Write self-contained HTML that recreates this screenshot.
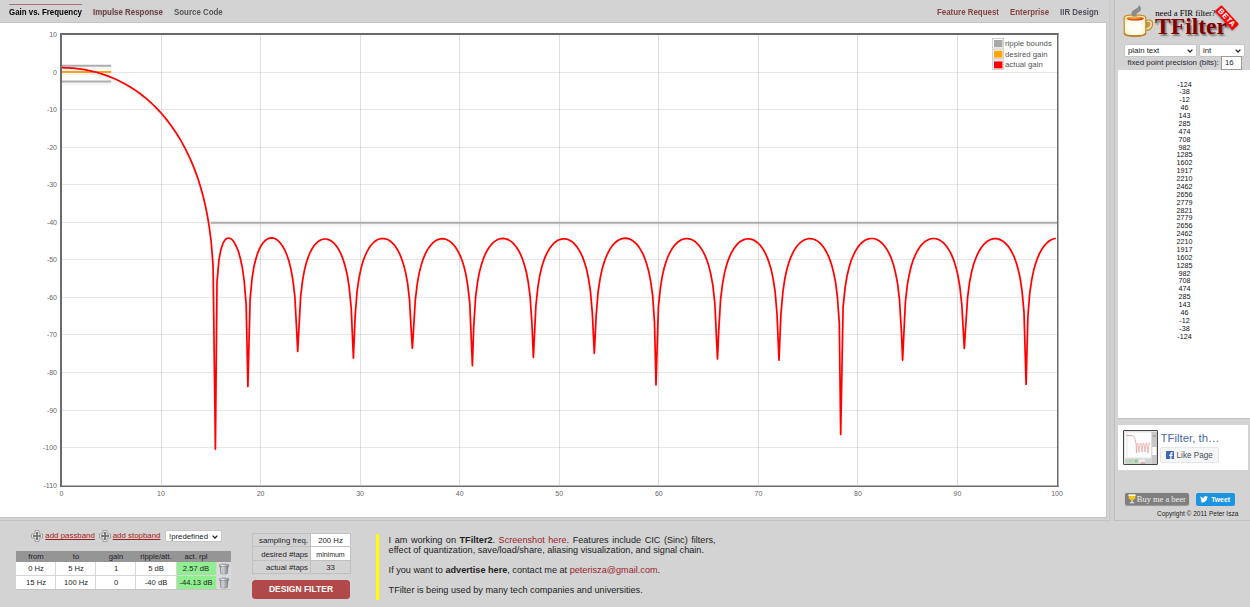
<!DOCTYPE html>
<html><head><meta charset="utf-8">
<style>
*{box-sizing:border-box}
html,body{margin:0;padding:0}
body{width:1250px;height:607px;background:#d3d3d3;position:relative;overflow:hidden;font-family:"Liberation Sans",sans-serif;color:#222}
.a{position:absolute;white-space:nowrap}
.nav{font-weight:bold;font-size:8.7px;line-height:10px;transform:scaleX(0.91);transform-origin:0 0}
.chart{position:absolute;left:0;top:22px;width:1107px;height:496px;background:#fff;border-top:1px solid #c4c4c4;border-right:1px solid #c4c4c4;border-bottom:1px solid #c4c4c4}
svg text{font-family:"Liberation Sans",sans-serif}
.sel{position:absolute;background:#fff;border:1px solid #c6c6c6;border-radius:2px;font-size:7.8px;line-height:10px;color:#1a1a24}
.chev{position:absolute;right:3px;top:3.5px;width:6px;height:4px;display:block}
table.bands{position:absolute;left:16px;top:551px;border-collapse:collapse;font-size:7.6px}
.p{font-size:9.15px;line-height:10px;color:#222}
</style></head><body>

<!-- header nav -->
<div class="a" style="left:9px;top:4px;width:73px;height:1px;background:#a47474"></div>
<div class="a nav" style="left:9.4px;top:6.6px;color:#000">Gain vs. Frequency</div>
<div class="a nav" style="left:93px;top:6.6px;color:#544c50;text-shadow:0 0 2px rgba(255,150,150,.75)">Impulse Response</div>
<div class="a nav" style="left:174px;top:6.6px;color:#555">Source Code</div>
<div class="a nav" style="left:937px;top:6.6px;color:#844444">Feature Request</div>
<div class="a nav" style="left:1009.5px;top:6.6px;color:#844444">Enterprise</div>
<div class="a nav" style="left:1059.5px;top:6.6px;color:#50505c">IIR Design</div>

<!-- panel borders -->
<div class="a" style="left:1109px;top:0;width:1px;height:521px;background:#c8c8c8"></div>
<div class="a" style="left:1110px;top:0;width:4px;height:521px;background:#cfcfcf"></div>
<div class="a" style="left:0;top:520px;width:1110px;height:1px;background:#c4c4c4"></div>
<div class="a" style="left:1114px;top:0;width:1px;height:521px;background:#c0c0c0"></div>
<div class="a" style="left:1114px;top:520px;width:136px;height:1px;background:#c0c0c0"></div>

<!-- chart -->
<div class="chart"></div>
<svg class="a" style="left:0;top:0" width="1250" height="607" viewBox="0 0 1250 607">
<defs>
<filter id="sh" x="-5%" y="-50%" width="110%" height="200%"><feGaussianBlur in="SourceAlpha" stdDeviation="0.8"/><feOffset dx="0" dy="1.5"/><feComponentTransfer><feFuncA type="linear" slope="0.08"/></feComponentTransfer><feMerge><feMergeNode/><feMergeNode in="SourceGraphic"/></feMerge></filter>
<clipPath id="pc"><rect x="62" y="35" width="995" height="450"/></clipPath>
</defs>
<line x1="161.50" y1="35" x2="161.50" y2="485" stroke="#000" stroke-opacity="0.125" stroke-width="1"/>
<line x1="260.50" y1="35" x2="260.50" y2="485" stroke="#000" stroke-opacity="0.125" stroke-width="1"/>
<line x1="360.50" y1="35" x2="360.50" y2="485" stroke="#000" stroke-opacity="0.125" stroke-width="1"/>
<line x1="459.50" y1="35" x2="459.50" y2="485" stroke="#000" stroke-opacity="0.125" stroke-width="1"/>
<line x1="559.50" y1="35" x2="559.50" y2="485" stroke="#000" stroke-opacity="0.125" stroke-width="1"/>
<line x1="658.50" y1="35" x2="658.50" y2="485" stroke="#000" stroke-opacity="0.125" stroke-width="1"/>
<line x1="758.50" y1="35" x2="758.50" y2="485" stroke="#000" stroke-opacity="0.125" stroke-width="1"/>
<line x1="857.50" y1="35" x2="857.50" y2="485" stroke="#000" stroke-opacity="0.125" stroke-width="1"/>
<line x1="957.50" y1="35" x2="957.50" y2="485" stroke="#000" stroke-opacity="0.125" stroke-width="1"/>
<line x1="62" y1="72.50" x2="1057" y2="72.50" stroke="#000" stroke-opacity="0.095" stroke-width="1"/>
<line x1="62" y1="109.50" x2="1057" y2="109.50" stroke="#000" stroke-opacity="0.095" stroke-width="1"/>
<line x1="62" y1="147.50" x2="1057" y2="147.50" stroke="#000" stroke-opacity="0.095" stroke-width="1"/>
<line x1="62" y1="184.50" x2="1057" y2="184.50" stroke="#000" stroke-opacity="0.095" stroke-width="1"/>
<line x1="62" y1="222.50" x2="1057" y2="222.50" stroke="#000" stroke-opacity="0.095" stroke-width="1"/>
<line x1="62" y1="259.50" x2="1057" y2="259.50" stroke="#000" stroke-opacity="0.095" stroke-width="1"/>
<line x1="62" y1="297.50" x2="1057" y2="297.50" stroke="#000" stroke-opacity="0.095" stroke-width="1"/>
<line x1="62" y1="334.50" x2="1057" y2="334.50" stroke="#000" stroke-opacity="0.095" stroke-width="1"/>
<line x1="62" y1="372.50" x2="1057" y2="372.50" stroke="#000" stroke-opacity="0.095" stroke-width="1"/>
<line x1="62" y1="410.50" x2="1057" y2="410.50" stroke="#000" stroke-opacity="0.095" stroke-width="1"/>
<line x1="62" y1="447.50" x2="1057" y2="447.50" stroke="#000" stroke-opacity="0.095" stroke-width="1"/>
<g font-size="7px" fill="#666">
<text x="57" y="37.1" text-anchor="end">10</text>
<text x="57" y="74.7" text-anchor="end">0</text>
<text x="57" y="112.2" text-anchor="end">-10</text>
<text x="57" y="149.8" text-anchor="end">-20</text>
<text x="57" y="187.3" text-anchor="end">-30</text>
<text x="57" y="224.8" text-anchor="end">-40</text>
<text x="57" y="262.4" text-anchor="end">-50</text>
<text x="57" y="299.9" text-anchor="end">-60</text>
<text x="57" y="337.4" text-anchor="end">-70</text>
<text x="57" y="375.0" text-anchor="end">-80</text>
<text x="57" y="412.5" text-anchor="end">-90</text>
<text x="57" y="450.1" text-anchor="end">-100</text>
<text x="57" y="487.6" text-anchor="end">-110</text>
<text x="61.4" y="496" text-anchor="middle">0</text>
<text x="161.0" y="496" text-anchor="middle">10</text>
<text x="260.6" y="496" text-anchor="middle">20</text>
<text x="360.1" y="496" text-anchor="middle">30</text>
<text x="459.7" y="496" text-anchor="middle">40</text>
<text x="559.2" y="496" text-anchor="middle">50</text>
<text x="658.8" y="496" text-anchor="middle">60</text>
<text x="758.4" y="496" text-anchor="middle">70</text>
<text x="857.9" y="496" text-anchor="middle">80</text>
<text x="957.5" y="496" text-anchor="middle">90</text>
<text x="1057.0" y="496" text-anchor="middle">100</text>
</g>
<g clip-path="url(#pc)">

<g filter="url(#sh)">
<line x1="61" y1="65.7" x2="111.2" y2="65.7" stroke="#acacac" stroke-width="2"/>
<line x1="61" y1="81.5" x2="111.2" y2="81.5" stroke="#acacac" stroke-width="2"/>
<line x1="210.8" y1="222.8" x2="1057" y2="222.8" stroke="#acacac" stroke-width="2"/>
<line x1="61" y1="72.0" x2="111.2" y2="72.0" stroke="#f9a51a" stroke-width="1.8"/>
</g>

<path d="M61.4,67.7L63.4,67.7L65.3,67.8L67.3,67.8L69.2,67.9L71.2,68.1L73.1,68.2L75.1,68.4L77.0,68.6L78.9,68.8L80.9,69.1L82.8,69.4L84.8,69.7L86.7,70.1L88.7,70.5L90.6,70.9L92.6,71.4L94.5,71.8L96.4,72.3L98.4,72.9L100.3,73.5L102.3,74.1L104.2,74.7L106.2,75.4L108.1,76.1L110.1,76.9L112.0,77.7L113.9,78.5L115.9,79.3L117.8,80.2L119.8,81.2L121.7,82.2L123.7,83.2L125.6,84.3L127.6,85.4L129.5,86.5L131.4,87.7L133.4,89.0L135.3,90.3L137.3,91.6L139.2,93.0L141.2,94.5L143.1,96.0L145.1,97.6L147.0,99.2L148.9,100.9L150.9,102.7L152.8,104.5L154.8,106.4L156.7,108.3L158.7,110.4L160.6,112.5L162.6,114.7L164.5,117.0L166.4,119.4L168.4,121.9L170.3,124.5L172.3,127.2L174.2,130.0L176.2,132.9L178.1,136.0L180.1,139.2L182.0,142.6L183.9,146.1L185.9,149.8L187.8,153.8L189.8,157.9L191.7,162.3L193.7,167.1L195.6,172.1L197.6,177.6L199.5,183.5L201.4,190.0L203.4,197.3L205.3,205.5L207.3,215.1L209.2,226.7L211.2,242.0L213.1,266.1L215.4,449.1L217.0,282.1L218.9,260.2L220.9,249.7L222.8,243.7L224.8,240.2L226.7,238.5L228.7,238.0L230.6,238.6L232.6,240.2L234.5,242.8L236.4,246.5L238.4,251.5L240.3,258.2L242.3,267.4L244.2,281.0L246.2,305.3L247.9,386.4L250.1,299.3L252.0,278.8L253.9,266.8L255.9,258.7L257.8,252.7L259.8,248.2L261.7,244.7L263.7,242.1L265.6,240.2L267.6,238.9L269.5,238.1L271.4,237.9L273.4,238.1L275.3,238.8L277.3,240.0L279.2,241.8L281.2,244.1L283.1,247.0L285.1,250.7L287.0,255.3L289.0,261.2L290.9,268.9L292.8,279.5L294.8,295.8L296.7,330.8L297.7,351.5L300.6,296.9L302.6,280.4L304.5,269.9L306.5,262.3L308.4,256.5L310.3,252.0L312.3,248.4L314.2,245.5L316.2,243.3L318.1,241.5L320.1,240.3L322.0,239.5L324.0,239.0L325.9,239.0L327.8,239.4L329.8,240.1L331.7,241.3L333.7,242.9L335.6,245.0L337.6,247.7L339.5,251.0L341.5,255.1L343.4,260.2L345.3,266.7L347.3,275.2L349.2,287.4L351.2,307.8L353.4,358.2L355.1,316.9L357.0,292.0L359.0,278.2L360.9,268.9L362.8,261.9L364.8,256.5L366.7,252.1L368.7,248.6L370.6,245.8L372.6,243.5L374.5,241.7L376.5,240.3L378.4,239.3L380.3,238.7L382.3,238.5L384.2,238.6L386.2,239.0L388.1,239.8L390.1,241.0L392.0,242.6L394.0,244.6L395.9,247.2L397.8,250.3L399.8,254.2L401.7,258.9L403.7,264.9L405.6,272.6L407.6,283.2L409.5,299.6L411.5,335.0L412.4,348.1L415.3,300.0L417.3,283.5L419.2,272.9L421.2,265.1L423.1,259.2L425.1,254.4L427.0,250.6L429.0,247.5L430.9,245.0L432.8,242.9L434.8,241.3L436.7,240.1L438.7,239.3L440.6,238.9L442.6,238.7L444.5,238.9L446.5,239.5L448.4,240.4L450.3,241.7L452.3,243.4L454.2,245.5L456.2,248.2L458.1,251.4L460.1,255.4L462.0,260.3L464.0,266.5L465.9,274.6L467.8,285.9L469.8,303.9L472.4,365.7L473.7,327.0L475.6,297.0L477.6,281.8L479.5,271.8L481.5,264.4L483.4,258.6L485.3,254.0L487.3,250.2L489.2,247.2L491.2,244.7L493.1,242.7L495.1,241.1L497.0,239.9L499.0,239.0L500.9,238.6L502.8,238.4L504.8,238.6L506.7,239.1L508.7,239.9L510.6,241.1L512.6,242.7L514.5,244.7L516.5,247.2L518.4,250.2L520.3,253.9L522.3,258.5L524.2,264.2L526.2,271.5L528.1,281.4L530.1,296.2L532.0,324.7L533.4,357.5L535.9,305.5L537.9,286.9L539.8,275.4L541.7,267.2L543.7,260.9L545.6,255.9L547.6,251.9L549.5,248.6L551.5,245.9L553.4,243.7L555.4,242.0L557.3,240.6L559.2,239.7L561.2,239.1L563.1,238.8L565.1,238.8L567.0,239.2L569.0,239.9L570.9,241.0L572.9,242.4L574.8,244.3L576.7,246.6L578.7,249.4L580.6,252.9L582.6,257.1L584.5,262.4L586.5,269.1L588.4,278.0L590.4,290.8L592.3,312.6L594.3,353.3L596.2,314.9L598.1,291.9L600.1,278.7L602.0,269.6L604.0,262.7L605.9,257.3L607.9,253.0L609.8,249.4L611.7,246.5L613.7,244.1L615.6,242.2L617.6,240.7L619.5,239.6L621.5,238.8L623.4,238.4L625.4,238.2L627.3,238.4L629.2,238.9L631.2,239.8L633.1,241.0L635.1,242.6L637.0,244.6L639.0,247.1L640.9,250.1L642.9,253.8L644.8,258.3L646.7,264.0L648.7,271.2L650.6,280.9L652.6,295.2L654.5,322.2L656.0,384.9L658.4,307.1L660.4,287.9L662.3,276.1L664.2,267.7L666.2,261.3L668.1,256.3L670.1,252.2L672.0,248.8L674.0,246.1L675.9,243.8L677.9,242.0L679.8,240.7L681.7,239.6L683.7,239.0L685.6,238.6L687.6,238.6L689.5,238.9L691.5,239.5L693.4,240.5L695.4,241.8L697.3,243.6L699.2,245.7L701.2,248.4L703.1,251.6L705.1,255.6L707.0,260.5L709.0,266.6L710.9,274.6L712.9,285.6L714.8,302.8L717.5,359.0L718.7,331.4L720.6,299.1L722.6,283.4L724.5,273.1L726.5,265.5L728.4,259.6L730.4,254.9L732.3,251.1L734.2,248.0L736.2,245.4L738.1,243.4L740.1,241.7L742.0,240.5L744.0,239.6L745.9,239.0L747.9,238.8L749.8,238.9L751.7,239.3L753.7,240.1L755.6,241.2L757.6,242.7L759.5,244.5L761.5,246.9L763.4,249.8L765.4,253.3L767.3,257.6L769.2,262.9L771.2,269.6L773.1,278.6L775.1,291.5L777.0,313.8L779.0,360.1L780.9,314.4L782.9,291.8L784.8,278.8L786.8,269.8L788.7,263.0L790.6,257.6L792.6,253.3L794.5,249.7L796.5,246.8L798.4,244.5L800.4,242.6L802.3,241.1L804.3,239.9L806.2,239.2L808.1,238.7L810.1,238.6L812.0,238.8L814.0,239.3L815.9,240.1L817.9,241.4L819.8,242.9L821.8,244.9L823.7,247.4L825.6,250.5L827.6,254.2L829.5,258.7L831.5,264.4L833.4,271.6L835.4,281.4L837.3,295.9L839.3,323.3L840.7,434.4L843.1,306.8L845.1,287.8L847.0,276.1L849.0,267.7L850.9,261.3L852.9,256.3L854.8,252.2L856.8,248.8L858.7,246.1L860.6,243.8L862.6,242.0L864.5,240.6L866.5,239.6L868.4,238.9L870.4,238.5L872.3,238.5L874.3,238.7L876.2,239.3L878.1,240.3L880.1,241.5L882.0,243.2L884.0,245.3L885.9,247.9L887.9,251.1L889.8,254.9L891.8,259.7L893.7,265.6L895.6,273.3L897.6,283.7L899.5,299.7L901.5,333.3L902.6,360.1L905.4,302.0L907.3,285.1L909.3,274.2L911.2,266.3L913.1,260.3L915.1,255.4L917.0,251.5L919.0,248.2L920.9,245.6L922.9,243.5L924.8,241.7L926.8,240.4L928.7,239.5L930.6,238.8L932.6,238.5L934.5,238.5L936.5,238.9L938.4,239.5L940.4,240.6L942.3,241.9L944.3,243.7L946.2,245.9L948.1,248.6L950.1,251.9L952.0,255.9L954.0,260.9L955.9,267.1L957.9,275.2L959.8,286.5L961.8,304.5L964.3,348.5L965.6,327.7L967.6,297.7L969.5,282.5L971.5,272.4L973.4,265.0L975.4,259.2L977.3,254.6L979.3,250.8L981.2,247.7L983.1,245.2L985.1,243.2L987.0,241.5L989.0,240.3L990.9,239.4L992.9,238.9L994.8,238.6L996.8,238.7L998.7,239.1L1000.6,239.9L1002.6,241.0L1004.5,242.4L1006.5,244.3L1008.4,246.6L1010.4,249.5L1012.3,253.0L1014.3,257.2L1016.2,262.5L1018.1,269.1L1020.1,278.0L1022.0,290.6L1024.0,312.0L1026.1,384.5L1027.9,316.2L1029.8,292.6L1031.8,279.3L1033.7,270.1L1035.7,263.2L1037.6,257.8L1039.5,253.4L1041.5,249.8L1043.4,246.9L1045.4,244.5L1047.3,242.5L1049.3,241.0L1051.2,239.8L1053.2,239.0L1055.1,238.5" fill="none" stroke="#ff0000" stroke-width="1.7" stroke-linejoin="round" stroke-linecap="round" filter="url(#sh)"/>
</g>
<g fill="#6a6a6a"><rect x="60" y="33" width="2" height="454"/><rect x="60" y="33" width="998.5" height="2"/><rect x="1057" y="33" width="1.5" height="454"/><rect x="60" y="485.5" width="998.5" height="1.5"/></g>
<!-- legend -->
<g>
<rect x="991" y="37" width="63" height="33" fill="#fff" fill-opacity="0.85"/>
<rect x="992.5" y="38.5" width="11" height="9.5" fill="none" stroke="#d0d0d0" stroke-width="1"/>
<rect x="994" y="40" width="8.5" height="7" fill="#a8a8a8"/>
<rect x="992.5" y="49.2" width="11" height="9.5" fill="none" stroke="#d0d0d0" stroke-width="1"/>
<rect x="994" y="50.7" width="8.5" height="7" fill="#ffa500"/>
<rect x="992.5" y="59.9" width="11" height="9.5" fill="none" stroke="#d0d0d0" stroke-width="1"/>
<rect x="994" y="61.4" width="8.5" height="7" fill="#ff0000"/>
<g font-size="7.8px" fill="#545454">
<text x="1005" y="46">ripple bounds</text>
<text x="1005" y="56.7">desired gain</text>
<text x="1005" y="67.4">actual gain</text>
</g>
</g>
</svg>

<!-- sidebar -->
<div id="logo">
<svg class="a" style="left:1120px;top:2.7px" width="36" height="36" viewBox="0 0 36 36">
<defs>
<radialGradient id="cupg" cx="0.5" cy="0.55" r="0.65"><stop offset="0" stop-color="#ffffff"/><stop offset="0.6" stop-color="#fffbe2"/><stop offset="1" stop-color="#f5e6b0"/></radialGradient>
<radialGradient id="cof" cx="0.45" cy="0.3" r="0.6"><stop offset="0" stop-color="#f8c040"/><stop offset="0.5" stop-color="#f09020"/><stop offset="1" stop-color="#e02010"/></radialGradient>
<filter id="bl"><feGaussianBlur stdDeviation="0.5"/></filter>
</defs>
<path d="M26 17.5 C31 16 33.5 18.5 32.5 22.5 C31.5 26 28.5 27.5 25.5 27 L25.5 24.5 C28 24.5 30 23 30 21 C30 19.5 28.5 19 26 20 Z" fill="#f6e2b0" stroke="#c08a2a" stroke-width="1.1"/>
<path d="M26 20.3 C28 19.6 29.5 20 29.4 21.5 C29.2 23 27.5 24 26 24 Z" fill="#c89040"/>
<path d="M4.2 14.5 Q4.2 11.8 15 11.8 Q25.8 11.8 25.8 14.5 L25.8 30.5 Q25.8 33.3 15 33.3 Q4.2 33.3 4.2 30.5 Z" fill="url(#cupg)" stroke="#c48c2c" stroke-width="1.2"/>
<path d="M4.6 30 Q4.6 32.8 15 32.8 Q25.4 32.8 25.4 30" fill="none" stroke="#b07a22" stroke-width="1.2"/>
<ellipse cx="15.2" cy="15.5" rx="8.6" ry="2.1" fill="url(#cof)"/>
<path d="M12.5 13.5 C10.5 10.5 11.5 8 15 6.3 C17.5 5 19 4 19 2 C21.5 4 22 7.5 18.5 9.3 C16.2 10.5 15.8 11.5 17 13.5 Z" fill="#8c8c8c" filter="url(#bl)"/>
</svg>
<div class="a" style="left:1155.3px;top:7.7px;font-family:'Liberation Serif',serif;font-size:8.6px;line-height:10px;color:#000">need a FIR filter?</div>
<div class="a" style="left:1155px;top:12.5px;font-family:'Liberation Serif',serif;font-weight:bold;font-size:23.6px;line-height:26px;color:#800000;text-shadow:1.5px 2px 1.5px rgba(0,0,0,.4)">TFilter</div>
<div class="a" style="left:1213.85px;top:13.1px;width:25.5px;height:9px;background:#ff0000;border-radius:1px;transform:rotate(47.3deg);color:#fff;font-weight:bold;font-size:7.6px;line-height:9px;text-align:center;letter-spacing:.5px;text-indent:.5px;box-shadow:0.5px 1px 1.5px rgba(0,0,0,.35)">BETA</div>
</div>

<div class="sel" style="left:1124px;top:44px;width:73px;height:12.5px;padding-left:3px;padding-top:0.5px">plain text<svg class="chev" width="6" height="4" viewBox="0 0 6 4"><path d="M0.6 0.6 L3 3 L5.4 0.6" fill="none" stroke="#222" stroke-width="1.3"/></svg></div>
<div class="sel" style="left:1199px;top:44px;width:46px;height:12.5px;padding-left:3px;padding-top:0.5px">int<svg class="chev" width="6" height="4" viewBox="0 0 6 4"><path d="M0.6 0.6 L3 3 L5.4 0.6" fill="none" stroke="#222" stroke-width="1.3"/></svg></div>
<div class="a" style="left:1127.5px;top:58px;font-size:7.86px;line-height:10px;color:#2a2a33">fixed point precision (bits):</div>
<div class="a" style="left:1221px;top:56px;width:21px;height:14px;background:#fff;border:1px solid #9a9a9a;font-size:7.86px;line-height:11.5px;padding-left:3px;color:#223">16</div>

<div class="a" style="left:1118px;top:70px;width:132px;height:349px;background:#fff;border-bottom:1px solid #c4c4c4"></div>
<div class="a" style="left:1118px;top:80.5px;width:133px;text-align:center;font-size:7.2px;line-height:7.87px;color:#111">-124<br>-38<br>-12<br>46<br>143<br>285<br>474<br>708<br>982<br>1285<br>1602<br>1917<br>2210<br>2462<br>2656<br>2779<br>2821<br>2779<br>2656<br>2462<br>2210<br>1917<br>1602<br>1285<br>982<br>708<br>474<br>285<br>143<br>46<br>-12<br>-38<br>-124</div>

<!-- facebook -->
<div class="a" style="left:1118px;top:425px;width:130px;height:45px;background:#fff"></div>
<div class="a" style="left:1123px;top:430px;width:35px;height:35px;border:1px solid #444;background:#eef0f0;border-radius:1px;overflow:hidden">
<svg width="33" height="33" viewBox="0 0 33 33" style="position:absolute;left:0;top:0">
<rect x="0" y="0" width="33" height="33" fill="#e4e4e4"/>
<rect x="1" y="1.5" width="26.5" height="26" fill="#fdfdfd"/>
<path d="M3 2.5 V27 M3 27 H27" stroke="#ccc" stroke-width="0.5"/>
<path d="M2 4.5 L8 4.5 C10 4.5 10.5 6 11.5 10 L12 12.5" fill="none" stroke="#e8a0a0" stroke-width="0.9"/>
<path d="M12 12.5 L12.5 22 L13 12.8 L14 12.5 L15 21.5 L16 12.5 L17 12.5 L18 21 L19 12.5 L20 12.5 L21 21 L22 12.5 L23 12.5 L24 22 L25 12.5 L26.5 12.5" fill="none" stroke="#e09090" stroke-width="0.6"/>
<rect x="27.5" y="1" width="5.5" height="32" fill="#c8c8c8"/>
<rect x="28.5" y="4" width="3.5" height="2" fill="#aaa"/>
<rect x="28.3" y="16" width="4" height="8" fill="#fff"/>
<rect x="1" y="27.5" width="26.5" height="5.5" fill="#d4d4d4"/>
<rect x="1.5" y="28.5" width="9" height="3" fill="#b8d8b8"/>
<rect x="11" y="28.5" width="2.5" height="3" fill="#8c8"/>
<rect x="15" y="28.5" width="6" height="3" fill="#eee"/>
<rect x="17" y="31.5" width="4" height="1" fill="#c88"/>
</svg>
</div>
<div class="a" style="left:1160.5px;top:431.5px;font-size:11.4px;line-height:12px;color:#4a6aa8">TFilter, th…</div>
<div class="a" style="left:1160px;top:447px;width:59px;height:16px;background:#f5f6f7;border:1px solid #e4e6ea;border-radius:2px"></div>
<svg class="a" style="left:1166px;top:451px" width="8" height="8" viewBox="0 0 8 8"><rect width="8" height="8" rx="0.6" fill="#4267b2"/><path d="M5.5 8 V5 H6.6 L6.8 3.8 H5.5 V3.1 C5.5 2.7 5.7 2.5 6.1 2.5 H6.8 V1.4 C6.6 1.4 6.2 1.3 5.8 1.3 C4.9 1.3 4.3 1.9 4.3 2.9 V3.8 H3.3 V5 H4.3 V8 Z" fill="#fff"/></svg>
<div class="a" style="left:1176.6px;top:450.8px;font-size:8.14px;line-height:10px;color:#4b4f56">Like Page</div>

<!-- beer / tweet -->
<div class="a" style="left:1125px;top:493px;width:64px;height:12px;background:#7f7f7f;border-radius:2.5px;box-shadow:0 0.5px 1px rgba(0,0,0,.3)"></div>
<div class="a" style="left:1127.5px;top:494px;width:8px;height:10px">
<svg style="display:block" width="8" height="10" viewBox="0 0 8 10"><path d="M0.5 0.5 L7.5 0.5 L7.2 4.5 Q4 7.5 0.8 4.5 Z" fill="#f5c818"/><path d="M0.5 0.5 L7.5 0.5 L7.45 2 L0.55 2 Z" fill="#fffbe8"/><rect x="3.4" y="6" width="1.2" height="2.4" fill="#eee"/><rect x="1.8" y="8.3" width="4.4" height="1" fill="#eee"/></svg>
</div>
<div class="a" style="left:1136.8px;top:493.5px;font-family:'Liberation Serif',serif;font-size:8.46px;line-height:10px;color:#f0f0f0">Buy me a beer</div>
<div class="a" style="left:1195.8px;top:493px;width:39px;height:13px;background:#1b95e0;border-radius:2px"></div>
<svg class="a" style="left:1200px;top:496px" width="8" height="6.6" viewBox="0 0 24 20"><path d="M24 2.4c-.9.4-1.8.6-2.8.8 1-.6 1.8-1.6 2.2-2.7-1 .6-2 1-3.1 1.2C19.4.7 18.1 0 16.6 0c-2.7 0-4.9 2.2-4.9 4.9 0 .4 0 .8.1 1.1C7.7 5.8 4.1 3.9 1.7.9c-.4.7-.7 1.6-.7 2.5 0 1.7.9 3.2 2.2 4.1-.8 0-1.6-.2-2.2-.6v.1c0 2.4 1.7 4.4 3.9 4.8-.4.1-.8.2-1.3.2-.3 0-.6 0-.9-.1.6 2 2.4 3.4 4.6 3.4-1.7 1.3-3.8 2.1-6.1 2.1-.4 0-.8 0-1.2-.1C2.2 18.8 4.8 19.6 7.5 19.6c9.1 0 14-7.5 14-14v-.6c1-.7 1.8-1.6 2.5-2.6z" fill="#fff"/></svg>
<div class="a" style="left:1211.2px;top:495.5px;font-size:6.8px;line-height:8px;color:#fff;font-weight:bold">Tweet</div>
<div class="a" style="left:1157px;top:509.5px;font-size:6.5px;line-height:8px;color:#222">Copyright © 2011 Peter Isza</div>

<!-- bottom panel -->
<div id="bottom">
<svg class="a" style="left:31px;top:530px" width="12" height="12" viewBox="0 0 12 12">
<path d="M4 0.6 H8 V4 H11.4 V8 H8 V11.4 H4 V8 H0.6 V4 H4 Z" fill="#f4f4f4" stroke="#9a9a9a" stroke-width="1"/>
<path d="M5 2 H7 V5 H10 V7 H7 V10 H5 V7 H2 V5 H5 Z" fill="#7a7a7a"/>
</svg>
<div class="a" style="left:45.3px;top:531px;font-size:7.9px;line-height:10px;color:#a41c1c;text-decoration:underline;text-decoration-skip-ink:none">add passband</div>
<svg class="a" style="left:98.5px;top:530px" width="12" height="12" viewBox="0 0 12 12">
<path d="M4 0.6 H8 V4 H11.4 V8 H8 V11.4 H4 V8 H0.6 V4 H4 Z" fill="#f4f4f4" stroke="#9a9a9a" stroke-width="1"/>
<path d="M5 2 H7 V5 H10 V7 H7 V10 H5 V7 H2 V5 H5 Z" fill="#7a7a7a"/>
</svg>
<div class="a" style="left:112.7px;top:531px;font-size:7.9px;line-height:10px;color:#a41c1c;text-decoration:underline;text-decoration-skip-ink:none">add stopband</div>
<div class="sel" style="left:165px;top:530px;width:57px;height:12px;padding-left:3px;padding-top:0.5px">!predefined<svg class="chev" width="6" height="4" viewBox="0 0 6 4"><path d="M0.6 0.6 L3 3 L5.4 0.6" fill="none" stroke="#222" stroke-width="1.3"/></svg></div>

<!-- bands table -->
<div class="a" style="left:16px;top:551px;width:215px;height:11px;background:#959595"></div>
<div class="a" style="left:16px;top:551px;width:200px;font-size:7.65px;line-height:11px;color:#1e1e28">
<span class="a" style="left:0;width:40px;text-align:center">from</span>
<span class="a" style="left:40px;width:40px;text-align:center">to</span>
<span class="a" style="left:80px;width:40px;text-align:center">gain</span>
<span class="a" style="left:120px;width:40px;text-align:center">ripple/att.</span>
<span class="a" style="left:160px;width:40px;text-align:center">act. rpl</span>
</div>
<div class="a" style="left:16px;top:562px;width:215px;height:28px;background:#d6d6d6"></div><div class="a" style="left:16px;top:589px;width:215px;height:1px;background:#c4c4c4"></div>
<div class="a" style="left:16px;top:562px;width:39px;height:13px;background:#fff"></div>
<div class="a" style="left:56px;top:562px;width:39px;height:13px;background:#fff"></div>
<div class="a" style="left:96px;top:562px;width:39px;height:13px;background:#fff"></div>
<div class="a" style="left:136px;top:562px;width:40px;height:13px;background:#fff"></div>
<div class="a" style="left:177px;top:562px;width:39px;height:13px;background:#90ee90"></div>
<div class="a" style="left:217px;top:562px;width:14px;height:13px;background:#d9d9d9"></div>
<div class="a" style="left:16px;top:576px;width:39px;height:13px;background:#fff"></div>
<div class="a" style="left:56px;top:576px;width:39px;height:13px;background:#fff"></div>
<div class="a" style="left:96px;top:576px;width:39px;height:13px;background:#fff"></div>
<div class="a" style="left:136px;top:576px;width:40px;height:13px;background:#fff"></div>
<div class="a" style="left:177px;top:576px;width:39px;height:13px;background:#90ee90"></div>
<div class="a" style="left:217px;top:576px;width:14px;height:13px;background:#d9d9d9"></div>
<div class="a" style="left:16px;top:563px;width:200px;font-size:7.65px;line-height:12px;color:#1e1e28">
<span class="a" style="left:0;width:40px;text-align:center">0 Hz</span>
<span class="a" style="left:40px;width:40px;text-align:center">5 Hz</span>
<span class="a" style="left:80px;width:40px;text-align:center">1</span>
<span class="a" style="left:120px;width:40px;text-align:center">5 dB</span>
<span class="a" style="left:160px;width:40px;text-align:center">2.57 dB</span>
</div>
<div class="a" style="left:16px;top:577px;width:200px;font-size:7.65px;line-height:12px;color:#1e1e28">
<span class="a" style="left:0;width:40px;text-align:center">15 Hz</span>
<span class="a" style="left:40px;width:40px;text-align:center">100 Hz</span>
<span class="a" style="left:80px;width:40px;text-align:center">0</span>
<span class="a" style="left:120px;width:40px;text-align:center">-40 dB</span>
<span class="a" style="left:160px;width:40px;text-align:center">-44.13 dB</span>
</div>
<svg class="a" style="left:217.5px;top:563px" width="12" height="12" viewBox="0 0 12 12"><defs><linearGradient id="tg" x1="0" x2="1"><stop offset="0" stop-color="#8a9096"/><stop offset="0.3" stop-color="#f4f6f8"/><stop offset="0.6" stop-color="#c8ccd0"/><stop offset="1" stop-color="#70767c"/></linearGradient></defs>
<rect x="4.5" y="0.3" width="3" height="1.5" rx="0.7" fill="#d8dce0" stroke="#8a9096" stroke-width="0.5"/>
<rect x="1.3" y="1.5" width="9.6" height="2.2" rx="1" fill="url(#tg)" stroke="#7a8086" stroke-width="0.5"/>
<path d="M2.2 3.7 H10 L9.4 10.5 Q6.1 11.5 2.8 10.5 Z" fill="url(#tg)" stroke="#6a7076" stroke-width="0.5"/>
<path d="M4.6 4.5 V10 M6.1 4.5 V10.3 M7.6 4.5 V10" stroke="#8a9096" stroke-width="0.6"/>
</svg>
<svg class="a" style="left:217.5px;top:577px" width="12" height="12" viewBox="0 0 12 12">
<rect x="4.5" y="0.3" width="3" height="1.5" rx="0.7" fill="#d8dce0" stroke="#8a9096" stroke-width="0.5"/>
<rect x="1.3" y="1.5" width="9.6" height="2.2" rx="1" fill="url(#tg)" stroke="#7a8086" stroke-width="0.5"/>
<path d="M2.2 3.7 H10 L9.4 10.5 Q6.1 11.5 2.8 10.5 Z" fill="url(#tg)" stroke="#6a7076" stroke-width="0.5"/>
<path d="M4.6 4.5 V10 M6.1 4.5 V10.3 M7.6 4.5 V10" stroke="#8a9096" stroke-width="0.6"/>
</svg>

<!-- params table -->
<div class="a" style="left:252px;top:533px;width:99px;height:41px;background:#c0c0c0"></div>
<div class="a" style="left:253px;top:534px;width:57px;height:12px;background:#d3d3d3"></div>
<div class="a" style="left:311px;top:534px;width:39px;height:12px;background:#fff"></div>
<div class="a" style="left:253px;top:547px;width:57px;height:13px;background:#d3d3d3"></div>
<div class="a" style="left:311px;top:547px;width:39px;height:13px;background:#fff"></div>
<div class="a" style="left:253px;top:561px;width:57px;height:12px;background:#d3d3d3"></div>
<div class="a" style="left:311px;top:561px;width:39px;height:12px;background:#d3d3d3"></div>
<div class="a" style="left:253px;top:534px;width:55px;font-size:7.8px;line-height:13.6px;color:#1e1e28;text-align:right;white-space:normal">sampling freq.<br>desired #taps<br>actual #taps</div>
<div class="a" style="left:311px;top:534px;width:39px;font-size:7.8px;line-height:13.6px;color:#1e1e28;text-align:center;white-space:normal">200 Hz<br><span style="font-size:7px">minimum</span><br>33</div>
<div class="a" style="left:252px;top:580px;width:98px;height:18.6px;background:#b04a4a;border-radius:3.5px;color:#fff;font-weight:bold;font-size:8.5px;line-height:18.6px;text-align:center">DESIGN FILTER</div>

<!-- text panel -->
<div class="a" style="left:376px;top:534px;width:3px;height:66px;background:#ffff00"></div>
<div class="a p" style="left:388.6px;top:535px;width:327px;white-space:normal;text-align:justify">I am working on <b>TFilter2</b>. <span style="color:#9c1e2e">Screenshot here</span>. Features include CIC (Sinc) filters, effect of quantization, save/load/share, aliasing visualization, and signal chain.</div>
<div class="a p" style="left:388.6px;top:564.5px">If you want to <b>advertise here</b>, contact me at <span style="color:#9c1e2e">peterisza@gmail.com</span>.</div>
<div class="a p" style="left:388.6px;top:584.7px">TFilter is being used by many tech companies and universities.</div>

</div>

</body></html>
